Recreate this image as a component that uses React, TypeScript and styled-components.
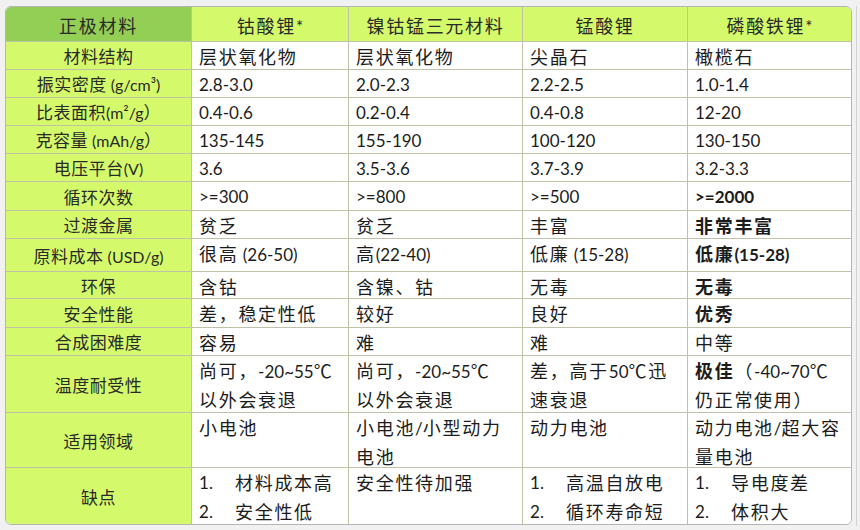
import React from "react";
import styled, { createGlobalStyle } from "styled-components";

const green = "#93cf55";
const lime = "#d4fa6c";
const line = "#bfc2a8";

const GlobalStyle = createGlobalStyle`
  html, body {
    margin: 0;
    padding: 0;
    background: #f1f1f1;
  }
  body {
    font-family: Lato, "Noto Sans CJK SC", sans-serif;
    color: #1c1c1c;
  }
`;

const Page = styled.div`
  display: flex;
  align-items: stretch;
  width: 860px;
  height: 530px;
  box-sizing: border-box;
  padding: 6px 0 4px 5px;
`;

const Frame = styled.div`
  width: 847px;
  height: 519px;
  box-sizing: border-box;
  border: 1px solid #b4b4b4;
  border-radius: 6px;
  overflow: hidden;
  background: #fff;
`;

const Edge = styled.div`
  margin-left: 4px;
  width: 3px;
  border-left: 1px solid #d2d2d2;
`;

const Grid = styled.div`
  display: grid;
  grid-template-columns: 186px 157px 174px 165px 163px;
`;

const Han = styled.span`
  font-family: "Noto Sans CJK SC", sans-serif;
  font-size: 18px;
  letter-spacing: 1.7px;
`;

const B = styled.span`
  font-weight: 700;
`;

const Label = styled.span`
  white-space: pre;
`;

interface CellProps {
  $last?: boolean;
  $bottom?: boolean;
}

const CellBase = styled.div<CellProps>`
  box-sizing: border-box;
  border-right: ${(p) => (p.$last ? "none" : `1px solid ${line}`)};
  border-bottom: ${(p) => (p.$bottom ? "none" : `1px solid ${line}`)};
  overflow: hidden;
`;

const HeadCell = styled(CellBase)<{ $corner?: boolean }>`
  display: flex;
  align-items: center;
  justify-content: center;
  background: ${(p) => (p.$corner ? green : lime)};
  font-size: 17px;
  color: #2a2a2a;
  padding-top: 1px;
`;

const RowHead = styled(CellBase)`
  display: flex;
  align-items: center;
  justify-content: center;
  background: ${lime};
  font-size: 16px;
  color: #2a2a2a;
  ${Han} {
    font-size: 17px;
    letter-spacing: 0.5px;
  }
`;

const Cell = styled(CellBase)`
  background: #fff;
  font-size: 17px;
  line-height: 27.5px;
  padding: 1px 4px 0 7px;
  white-space: nowrap;
`;

const Item = styled.div`
  display: flex;
`;

const Num = styled.span`
  width: 36px;
  flex: none;
`;

const HAN = /([\u2103\u3000-\u303f\u3400-\u9fff\uff00-\uffef]+)/;

function tx(s: string) {
  return s
    .split(HAN)
    .map((part, i) =>
      part === "" ? null : i % 2 === 1 ? <Han key={i}>{part}</Han> : <span key={i}>{part}</span>
    );
}

function List({ items }: { items: string[] }) {
  return (
    <>
      {items.map((t, i) => (
        <Item key={i}>
          <Num>{i + 1}.</Num>
          <span>{tx(t)}</span>
        </Item>
      ))}
    </>
  );
}

function Lines({ lines }: { lines: React.ReactNode[] }) {
  return (
    <>
      {lines.map((l, i) => (
        <div key={i}>{l}</div>
      ))}
    </>
  );
}

const headers = ["钴酸锂*", "镍钴锰三元材料", "锰酸锂", "磷酸铁锂*"];

interface Row {
  label: string;
  height: number;
  cells: React.ReactNode[];
}

const rows: Row[] = [
  { label: "材料结构", height: 28, cells: [tx("层状氧化物"), tx("层状氧化物"), tx("尖晶石"), tx("橄榄石")] },
  { label: "振实密度 (g/cm³)", height: 28, cells: [tx("2.8-3.0"), tx("2.0-2.3"), tx("2.2-2.5"), tx("1.0-1.4")] },
  { label: "比表面积(m²/g）", height: 28, cells: [tx("0.4-0.6"), tx("0.2-0.4"), tx("0.4-0.8"), tx("12-20")] },
  { label: "克容量 (mAh/g）", height: 28, cells: [tx("135-145"), tx("155-190"), tx("100-120"), tx("130-150")] },
  { label: "电压平台(V)", height: 28, cells: [tx("3.6"), tx("3.5-3.6"), tx("3.7-3.9"), tx("3.2-3.3")] },
  { label: "循环次数", height: 29, cells: [tx(">=300"), tx(">=800"), tx(">=500"), <B>{tx(">=2000")}</B>] },
  { label: "过渡金属", height: 28, cells: [tx("贫乏"), tx("贫乏"), tx("丰富"), <B>{tx("非常丰富")}</B>] },
  {
    label: "原料成本 (USD/g)",
    height: 33,
    cells: [tx("很高 (26-50)"), tx("高(22-40)"), tx("低廉 (15-28)"), <B>{tx("低廉(15-28)")}</B>],
  },
  { label: "环保", height: 27, cells: [tx("含钴"), tx("含镍、钴"), tx("无毒"), <B>{tx("无毒")}</B>] },
  { label: "安全性能", height: 29, cells: [tx("差，稳定性低"), tx("较好"), tx("良好"), <B>{tx("优秀")}</B>] },
  { label: "合成困难度", height: 28, cells: [tx("容易"), tx("难"), tx("难"), tx("中等")] },
  {
    label: "温度耐受性",
    height: 57,
    cells: [
      <Lines lines={[tx("尚可，-20~55℃"), tx("以外会衰退")]} />,
      <Lines lines={[tx("尚可，-20~55℃"), tx("以外会衰退")]} />,
      <Lines lines={[tx("差，高于50℃迅"), tx("速衰退")]} />,
      <Lines
        lines={[
          <>
            <B>{tx("极佳")}</B>
            {tx("（-40~70℃")}
          </>,
          tx("仍正常使用）"),
        ]}
      />,
    ],
  },
  {
    label: "适用领域",
    height: 55,
    cells: [
      tx("小电池"),
      <Lines lines={[tx("小电池/小型动力"), tx("电池")]} />,
      tx("动力电池"),
      <Lines lines={[tx("动力电池/超大容"), tx("量电池")]} />,
    ],
  },
  {
    label: "缺点",
    height: 56,
    cells: [
      <List items={["材料成本高", "安全性低"]} />,
      tx("安全性待加强"),
      <List items={["高温自放电", "循环寿命短"]} />,
      <List items={["导电度差", "体积大"]} />,
    ],
  },
];

export default function App() {
  const template = [35, ...rows.map((r) => r.height)].map((h) => `${h}px`).join(" ");
  return (
    <>
      <GlobalStyle />
      <Page>
        <Frame>
          <Grid style={{ gridTemplateRows: template }}>
            <HeadCell $corner>
              <Label>{tx("正极材料")}</Label>
            </HeadCell>
            {headers.map((h, i) => (
              <HeadCell key={h} $last={i === headers.length - 1}>
                <Label>{tx(h)}</Label>
              </HeadCell>
            ))}
            {rows.map((r, ri) => {
              const bottom = ri === rows.length - 1;
              return (
                <React.Fragment key={r.label}>
                  <RowHead $bottom={bottom}>
                    <Label>{tx(r.label)}</Label>
                  </RowHead>
                  {r.cells.map((c, ci) => (
                    <Cell key={ci} $bottom={bottom} $last={ci === r.cells.length - 1}>
                      {c}
                    </Cell>
                  ))}
                </React.Fragment>
              );
            })}
          </Grid>
        </Frame>
        <Edge />
      </Page>
    </>
  );
}
